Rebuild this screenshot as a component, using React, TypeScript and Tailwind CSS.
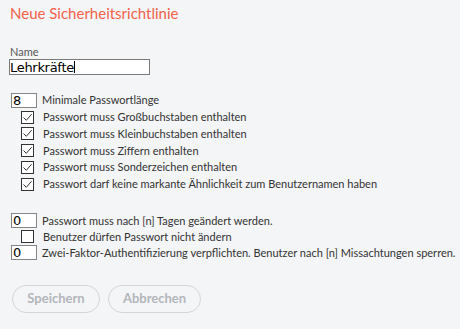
import React from "react";

const font = { fontFamily: "Lato, 'Open Sans', sans-serif" };

function Check({ checked }: { checked: boolean }) {
  return (
    <span className="w-[13px] h-[13px] border border-[#333] bg-white flex items-center justify-center shrink-0">
      {checked && (
        <svg width="11" height="11" viewBox="0 0 11 11">
          <path d="M1.5 5.5 L4.3 8.3 L9.6 2.2" fill="none" stroke="#333" strokeWidth="1" />
        </svg>
      )}
    </span>
  );
}

function NumBox({ value }: { value: string }) {
  return (
    <span
      className="w-[26px] h-[15px] border border-[#858585] bg-white flex items-center pl-[1px] text-[13px] text-black leading-none shrink-0"
      style={{ fontFamily: "'DejaVu Sans', sans-serif" }}
    >
      {value}
    </span>
  );
}

function CheckRow({ label, checked, h }: { label: string; checked: boolean; h: string }) {
  return (
    <div className={`flex items-center ${h}`}>
      <div className="w-[32px] flex justify-end pr-[9px] ml-[1px]">
        <Check checked={checked} />
      </div>
      <span className="text-[11px] text-[#333]">{label}</span>
    </div>
  );
}

function NumRow({ label, value, h }: { label: string; value: string; h: string }) {
  return (
    <div className={`flex items-center ${h}`}>
      <div className="w-[32px] pl-[1px]">
        <NumBox value={value} />
      </div>
      <span className="text-[11px] text-[#333] whitespace-nowrap">{label}</span>
    </div>
  );
}

export default function App() {
  return (
    <div className="w-[460px] h-[329px] bg-[#f4f5f7] pl-[10px] pt-[3px] overflow-hidden" style={font}>
      <div className="text-[15px] text-[#f2614a] leading-[20px]">Neue Sicherheitsrichtlinie</div>
      <div className="mt-[22px] text-[11px] text-[#555] leading-[13px]">Name</div>
      <div
        className="mt-[1px] -ml-[1px] w-[141px] h-[16px] border border-[#7a7a7a] bg-white flex items-center text-[13px] text-black leading-none"
        style={{ fontFamily: "'DejaVu Sans', sans-serif" }}
      >
        <span className="tracking-[-0.3px]">Lehrkräfte</span>
        <span className="w-[1px] h-[12px] bg-black" />
      </div>

      <div className="mt-[17px]">
        <NumRow h="h-[16.8px]" value="8" label="Minimale Passwortlänge" />
        <CheckRow h="h-[16.8px]" checked label="Passwort muss Großbuchstaben enthalten" />
        <CheckRow h="h-[16.8px]" checked label="Passwort muss Kleinbuchstaben enthalten" />
        <CheckRow h="h-[16.8px]" checked label="Passwort muss Ziffern enthalten" />
        <CheckRow h="h-[16.8px]" checked label="Passwort muss Sonderzeichen enthalten" />
        <CheckRow h="h-[16.8px]" checked label="Passwort darf keine markante Ähnlichkeit zum Benutzernamen haben" />
      </div>

      <div className="mt-[20px]">
        <NumRow h="h-[16px]" value="0" label="Passwort muss nach [n] Tagen geändert werden." />
        <CheckRow h="h-[16px]" checked={false} label="Benutzer dürfen Passwort nicht ändern" />
        <NumRow h="h-[16px]" value="0" label="Zwei-Faktor-Authentifizierung verpflichten. Benutzer nach [n] Missachtungen sperren." />
      </div>

      <div className="mt-[24px] flex gap-[8px] ml-[2px]">
        <button className="w-[88px] h-[28px] rounded-full border border-[#d3d5d9] text-[13px] font-bold text-[#b3b6bb]">
          Speichern
        </button>
        <button className="w-[93px] h-[28px] rounded-full border border-[#d3d5d9] text-[13px] font-bold text-[#b3b6bb]">
          Abbrechen
        </button>
      </div>
    </div>
  );
}
